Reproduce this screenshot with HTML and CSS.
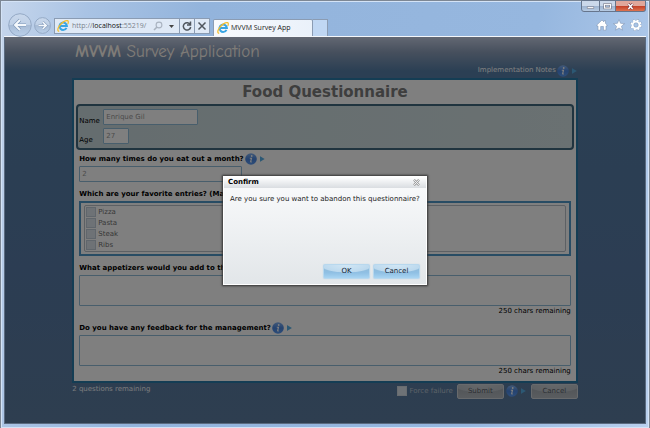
FILE: index.html
```html
<!DOCTYPE html>
<html lang="en">
<head>
<meta charset="utf-8">
<title>MVVM Survey App</title>
<link rel="stylesheet" href="styles.css">
</head>
<body>
<svg class="defs" aria-hidden="true">
  <defs>
    <linearGradient id="ball" x1="0" y1="0" x2="0" y2="1">
      <stop offset="0" stop-color="#86b4f2"/><stop offset=".5" stop-color="#4a86e0"/><stop offset="1" stop-color="#5c9cf4"/>
    </linearGradient>
    <linearGradient id="glass" x1="0" y1="0" x2="0" y2="1">
      <stop offset="0" stop-color="#c9d8ec"/><stop offset=".48" stop-color="#bfd0e6"/><stop offset=".5" stop-color="#a8bcd6"/><stop offset="1" stop-color="#b9cfe9"/>
    </linearGradient>
    <symbol id="info" viewBox="0 0 12 12">
      <circle cx="6" cy="6" r="5.8" fill="url(#ball)"/>
      <circle cx="6.7" cy="3" r=".9" fill="#fff"/>
      <path d="M4.800 5.200h1.700L5.600 8.800q0 .5 1.100 0" fill="none" stroke="#fff" stroke-width="1.100"/>
    </symbol>
    <symbol id="ie" viewBox="0 0 12 12">
      <path d="M9.5 7.9A3.7 3.7 0 1 1 9.9 6H3.2" fill="none" stroke="#39a5e3" stroke-width="2"/>
      <path d="M2.2 11.2C.2 11.3.4 8.8 2.4 5.900C4.600 2.600 8.500.2 10.500.700c1.100.300 1 1.800.300 3.200" fill="none" stroke="#f3bd2d" stroke-width="1.200"/>
    </symbol>
  </defs>
</svg>
<div class="window">
  <header class="chrome">
    <div class="caption">
      <button class="cap min" aria-label="Minimize"><svg viewBox="0 0 18 12"><rect x="5" y="7" width="8" height="2" fill="#fff" stroke="#667" stroke-width=".6"/></svg></button>
      <button class="cap max" aria-label="Maximize"><svg viewBox="0 0 16 12"><rect x="4.500" y="4" width="7" height="4.500" fill="none" stroke="#667" stroke-width="2.600"/><rect x="4.500" y="4" width="7" height="4.500" fill="none" stroke="#fff" stroke-width="1.400"/></svg></button>
      <button class="cap close" aria-label="Close"><svg viewBox="0 0 30 12"><path d="M12.500 3.500l5 6m0-6l-5 6" stroke="#634" stroke-width="3"/><path d="M12.500 3.500l5 6m0-6l-5 6" stroke="#fff" stroke-width="1.800"/></svg></button>
    </div>
    <div class="toolbar">
      <div class="nav">
        <button class="round back" aria-label="Back"><svg viewBox="0 0 24 24"><circle cx="12" cy="12" r="11.300" fill="url(#glass)" stroke="#94a9c5"/><path d="M18 12H7m5-5l-5 5 5 5" fill="none" stroke="#7f97b8" stroke-width="3.200"/><path d="M18 12H7m5-5l-5 5 5 5" fill="none" stroke="#f4f8fc" stroke-width="2"/></svg></button>
        <button class="round forward" aria-label="Forward"><svg viewBox="0 0 17 17"><circle cx="8.500" cy="8.500" r="7.900" fill="url(#glass)" stroke="#94a9c5"/><path d="M4.500 8.500h7.500M8.700 5l3.500 3.500L8.700 12" fill="none" stroke="#7f97b8" stroke-width="2.600"/><path d="M4.500 8.500h7.500M8.700 5l3.500 3.500L8.700 12" fill="none" stroke="#f4f8fc" stroke-width="1.600"/></svg></button>
      </div>
      <div class="address">
        <svg class="ie"><use href="#ie"/></svg>
        <span class="url">http://<b>localhost</b>:55219/</span>
        <svg class="find" viewBox="0 0 10 10"><circle cx="6" cy="4" r="2.900" fill="none" stroke="#a9b3c0" stroke-width="1.100"/><path d="M4 6L1 9" stroke="#a9b3c0" stroke-width="1.600"/></svg>
        <svg class="drop" viewBox="0 0 5 3"><path d="M0 0h5L2.500 3z" fill="#444"/></svg>
        <button class="cell" aria-label="Refresh"><svg viewBox="0 0 10 10"><path d="M8.300 3.600A3.700 3.700 0 1 0 8.700 6M8.500 .500v3.500H5" fill="none" stroke="#50565e" stroke-width="1.500"/></svg></button>
        <button class="cell" aria-label="Stop"><svg viewBox="0 0 10 10"><path d="M1.500 1.500l7 7m0-7l-7 7" stroke="#50565e" stroke-width="1.500"/></svg></button>
      </div>
      <div class="tab"><svg class="ie"><use href="#ie"/></svg><span>MVVM Survey App</span></div>
      <button class="newtab" aria-label="New tab"></button>
      <div class="tools">
        <svg viewBox="0 0 12 12"><path d="M.8 6L6 1l2 1.900V1.500h1.500v2.900L11.200 6v1H10v4.200H7.400V7.500H4.700v3.700H2V7H.8z" fill="#fff" stroke="#7d94b3" stroke-width=".6"/></svg>
        <svg viewBox="0 0 12 12"><path d="M6 .6l1.600 3.700 4 .3-3.100 2.600 1 4L6 9l-3.500 2.200 1-4L.4 4.600l4-.3z" fill="#fff" stroke="#7d94b3" stroke-width=".6"/></svg>
        <svg viewBox="0 0 12 12"><circle cx="6" cy="6" r="4.700" fill="none" stroke="#7d94b3" stroke-width="2.600" stroke-dasharray="2.100 1.590"/><circle cx="6" cy="6" r="4.600" fill="none" stroke="#fff" stroke-width="2" stroke-dasharray="2 1.610"/><circle cx="6" cy="6" r="3.300" fill="none" stroke="#fff" stroke-width="1.900"/><circle cx="6" cy="6" r="2.200" fill="none" stroke="#7d94b3" stroke-width=".5"/></svg>
      </div>
    </div>
  </header>

  <main class="page">
    <div class="content">
      <div class="banner">
        <h1><b>MVVM</b> Survey Application</h1>
        <div class="notes"><span>Implementation Notes</span><svg class="info"><use href="#info"/></svg><i class="more"></i></div>
      </div>
      <form class="card">
        <h2>Food Questionnaire</h2>
        <div class="person">
          <label for="name">Name</label><input id="name" class="name" value="Enrique Gil" disabled>
          <label for="age">Age</label><input id="age" class="age" value="27" disabled>
        </div>
        <div class="questions">
          <div class="question">
            <div class="ask"><label for="q1">How many times do you eat out a month?</label><svg class="info"><use href="#info"/></svg><i class="more"></i></div>
            <input id="q1" class="times" value="2" disabled>
          </div>
          <div class="question">
            <div class="ask"><span id="q2">Which are your favorite entries? (Ma</span></div>
            <div class="entries" role="group" aria-labelledby="q2">
              <div class="list">
                <label><input type="checkbox" disabled>Pizza</label>
                <label><input type="checkbox" disabled>Pasta</label>
                <label><input type="checkbox" disabled>Steak</label>
                <label><input type="checkbox" disabled>Ribs</label>
              </div>
            </div>
          </div>
          <div class="question">
            <div class="ask"><label for="q3">What appetizers would you add to th</label></div>
            <textarea id="q3" disabled></textarea>
            <div class="count">250 chars remaining</div>
          </div>
          <div class="question">
            <div class="ask"><label for="q4">Do you have any feedback for the management?</label><svg class="info"><use href="#info"/></svg><i class="more"></i></div>
            <textarea id="q4" disabled></textarea>
            <div class="count">250 chars remaining</div>
          </div>
        </div>
      </form>
      <div class="footer">
        <span class="left">2 questions remaining</span>
        <label class="force"><input type="checkbox" disabled>Force failure</label>
        <button class="btn gray" disabled>Submit</button>
        <svg class="info"><use href="#info"/></svg><i class="more"></i>
        <button class="btn gray" disabled>Cancel</button>
      </div>
    </div>
    <div class="overlay">
      <div class="dialog" role="dialog" aria-labelledby="dt">
        <div class="bar"><span id="dt">Confirm</span><button class="x" aria-label="Close dialog"><svg viewBox="0 0 7 7"><path d="M1 .8l5 5.400M6 .8L1 6.200" stroke="#999" stroke-width="2.400"/><path d="M1 .8l5 5.400M6 .8L1 6.200" stroke="#f4f5f6" stroke-width="1"/></svg></button></div>
        <p>Are you sure you want to abandon this questionnaire?</p>
        <div class="actions"><button class="btn">OK</button><button class="btn">Cancel</button></div>
      </div>
    </div>
  </main>
</div>
</body>
</html>
```
FILE: styles.css
```css
* { box-sizing: border-box; }
body { margin: 0; font-family: "DejaVu Sans", Verdana, sans-serif; font-size: 7px; line-height: 10px; color: #000; }
button, input, textarea { font: inherit; margin: 0; padding: 0; color: inherit; border: 0; background: none; }
svg { display: block; flex: none; }
.defs { position: absolute; width: 0; height: 0; }

.window {
  display: flex; flex-direction: column; min-height: 100vh;
  padding: 0 3px 4px; border: 1px solid #7d8794; border-width: 1px 1px 0;
  background: linear-gradient(100deg, #c6d6ec 0, #a9c3e4 12%, #93b4dc 28%, #96b7df 75%, #b9d0ee 100%);
  box-shadow: inset 0 0 0 1px #d4e3f6;
}
.chrome { height: 36px; display: flex; flex-direction: column; border-bottom: 1px solid #f4f7fb; }
.caption { display: flex; justify-content: flex-end; height: 12px; margin-top: -1px; }
.cap { height: 12px; border: 1px solid #66758c; border-left-width: 0; background: linear-gradient(#cbd8ea 45%, #9db2ce 50%, #b6cbe4); }
.cap svg { width: 100%; height: 10px; }
.min { width: 19px; border-left-width: 1px; border-bottom-left-radius: 3px; }
.max { width: 16px; }
.close { width: 30px; border-bottom-right-radius: 3px; background: linear-gradient(#e0a79b 45%, #c23e27 50%, #dd7350); }
.toolbar { display: flex; align-items: flex-end; flex: 1; }
.nav { display: flex; align-items: center; width: 50px; padding-left: 4px; margin-bottom: -1px; gap: 2px; }
.back svg { width: 24px; height: 24px; }
.forward svg { width: 17px; height: 17px; }
.address { display: flex; align-items: center; width: 156px; height: 16px; margin-bottom: 2px; border: 1px solid #8b9cb3; background: #dfe9f6; font-family: "Open Sans", sans-serif; font-size: 7px; color: #7b828c; }
.address b { font-weight: 400; color: #111; }
.ie { width: 12px; height: 12px; }
.address .ie { margin: 0 3px 0 2px; }
.url { flex: 1; white-space: nowrap; }
.find { width: 10px; height: 10px; }
.drop { width: 5px; height: 3px; margin: 0 5px 0 6px; }
.cell { width: 15px; height: 14px; padding: 2px; border-left: 1px solid #8b9cb3; }
.cell svg { width: 10px; height: 10px; }
.tab { display: flex; align-items: center; gap: 2px; width: 100px; height: 17px; margin-left: 3px; padding-left: 3px; border: 1px solid #8b9cb3; border-bottom: 0; border-radius: 2px 2px 0 0; background: linear-gradient(90deg, #f8fafd, #eaf1fa); font-family: "Open Sans", sans-serif; font-size: 7px; color: #222; }
.newtab { width: 15px; height: 17px; border: 1px solid #8b9cb3; border-width: 1px 1px 0 0; background: #c0d7f3; }
.tools { display: flex; gap: 5px; margin: 0 4px 5px auto; }
.tools svg { width: 12px; height: 12px; }

.page { position: relative; flex: 1; display: flex; justify-content: center; border: 1px solid #5b6b80; border-top: 0; background: linear-gradient(#c6d0e6 0, #8ea0bb 15px, #567fa8 34px, #587ba6 60%, #5c7ca0 100%); }
.content { width: 79%; display: flex; flex-direction: column; }
.banner { display: flex; justify-content: space-between; height: 41px; padding-left: 3px; }
.banner h1 { margin: 5px 0 0; font: 400 17px/20px "Comic Neue", "Comic Sans MS", "DejaVu Sans", sans-serif; color: #fff8f0; white-space: nowrap; }
.notes { display: flex; align-items: flex-end; height: 40px; color: #fff; }
.notes span { line-height: 14px; margin-right: 1px; }
.notes .more { margin-right: 1px; }
.info { width: 12px; height: 12px; }
.more { width: 5px; height: 6px; margin: 0 2px 3px 3px; background: #58b0e8; clip-path: polygon(0 0, 100% 50%, 0 100%); }
.card { padding: 0 2px 5px; border: 2px solid #287aa8; background: #fff; }
.card h2 { margin: 0; font-size: 15px; line-height: 24px; text-align: center; color: #7c7c7c; }
.person { display: grid; grid-template-columns: 24px 1fr; row-gap: 3px; align-items: end; height: 46px; padding: 3px 0 4px 1px; border: 2px solid #40687f; border-radius: 4px; background: linear-gradient(90deg, #cadade, #d4e2e4); }
.person label { line-height: 8px; }
input:not([type]), textarea { border: 1px solid #90bcd8; border-radius: 1px; background: #fff; color: #989898; padding: 0 2px; }
.name { width: 95px; height: 16px; }
.age { width: 26px; height: 16px; }
.questions { display: flex; flex-direction: column; gap: 5px; padding: 2px 3px 0; }
.question { display: flex; flex-direction: column; }
.ask { display: flex; align-items: center; height: 14px; font-weight: 700; }
.ask .info { margin-left: 1px; }
.ask .more { margin-bottom: 0; }
.times { width: 163px; height: 16px; }
.entries { height: 55px; padding: 2px 3px; border: 2px solid #5098c8; }
.list { display: flex; flex-direction: column; gap: 1px; height: 47px; padding: 1px; border: 1px solid #b8c0c8; border-radius: 2px; color: #707070; }
.list label { display: flex; align-items: center; gap: 2px; height: 10px; }
.force { display: flex; align-items: center; gap: 3px; }
input[type="checkbox"] { appearance: none; width: 10px; height: 10px; border: 1px solid #d0d8e0; background: #dce4ec; }
.list input[type="checkbox"] { border-color: #c0ccd8; }
textarea { display: block; width: 100%; height: 31px; resize: none; }
.count { height: 10px; text-align: right; }
.footer { display: flex; align-items: center; height: 16px; color: #f0f4f8; }
.left { flex: 1; margin-top: -4px; }
.force { margin-right: 4px; color: #b8c4d0; }
.footer .info { margin-left: 2px; }
.footer .more { margin: 0 5px 0 3px; }
.btn { width: 47px; height: 15px; border: 1px solid #b8d8ee; border-radius: 2px; color: #123; background: radial-gradient(ellipse 60% 60% at 50% 0, #d2e7f5 0, #bcd9ee 90%, transparent 100%), linear-gradient(#8fb8d4, #90c0e4 60%, #a8d4f2); box-shadow: 0 0 1px #a8c8e0; }
.gray { border-color: #d0d4d8; color: #586068; background: radial-gradient(ellipse 60% 60% at 50% 0, #ccd0d4 0, #bcc2c8 90%, transparent 100%), linear-gradient(#a0a6ac, #b4bac0); box-shadow: none; }

.overlay { position: absolute; inset: 0; display: flex; align-items: center; justify-content: center; background: rgba(0, 0, 0, .5); }
.dialog { display: flex; flex-direction: column; width: 204px; height: 109px; border: 1px solid #fff; background: linear-gradient(#fafbfc, #e2e6e9); box-shadow: 0 0 2px 1px #333; }
.bar { display: flex; align-items: center; justify-content: space-between; height: 11px; padding: 0 6px 0 4px; background: linear-gradient(#fff, #d9dde1); font-weight: 700; }
.x svg { width: 7px; height: 7px; }
.dialog p { margin: 6px; white-space: nowrap; color: #222; }
.actions { display: flex; justify-content: flex-end; gap: 3px; margin-top: auto; padding: 0 6px 5px; }
```
